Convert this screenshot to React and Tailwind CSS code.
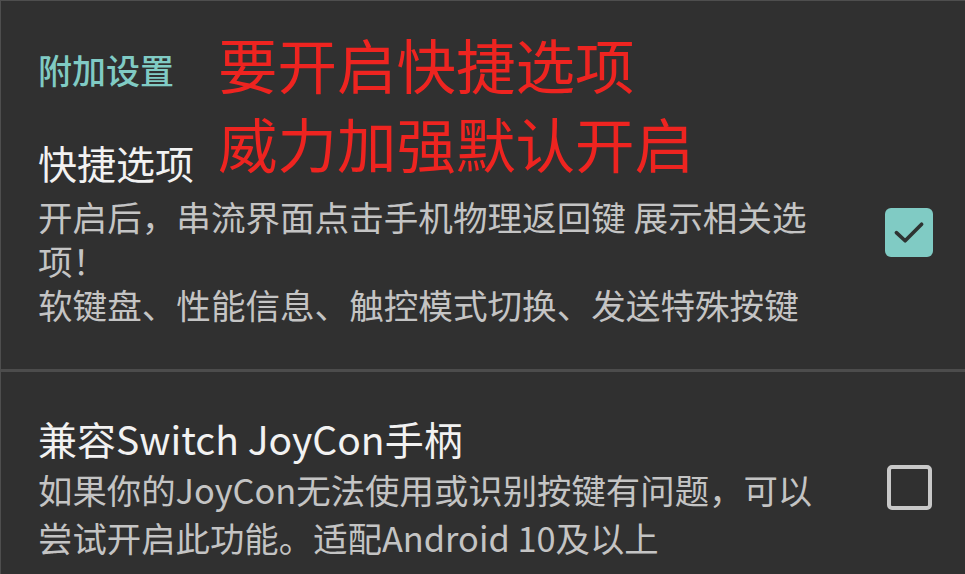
import React from "react";

const font = { fontFamily: '"Noto Sans CJK SC", "Noto Sans", sans-serif' };

function CheckedBox() {
  return (
    <div className="w-[48px] h-[49px] rounded-[6px] bg-[#80cbc4] flex items-center justify-center shrink-0">
      <svg width="42" height="42" viewBox="0 0 24 24" fill="none">
        <path d="M4.8 12.4l5 4.6L19.2 7.6" stroke="#2e3332" strokeWidth="2.1" strokeLinecap="round" strokeLinejoin="round" />
      </svg>
    </div>
  );
}

function EmptyBox() {
  return <div className="w-[45px] h-[45px] rounded-[5px] border-[4px] border-[#c8c8c8] shrink-0" />;
}

export default function App() {
  return (
    <div
      className="relative w-[965px] h-[574px] overflow-hidden bg-[#303030] border-t border-l border-[#4e4e4e]"
      style={font}
    >
      <div className="pl-[37px] pt-[45px]">
        <div className="h-[48px] leading-[48px] text-[34px] font-medium text-[#80cbc4]">附加设置</div>
      </div>

      <div className="flex items-center pl-[37px] pr-[32px] mt-[44px]">
        <div className="flex-1 flex flex-col">
          <div className="h-[48px] leading-[48px] text-[39px] text-[#f2f2f2]">快捷选项</div>
          <div className="mt-[8px] text-[34.6px] leading-[44px] text-[#c4c4c4]">
            <div className="whitespace-nowrap">开启后，串流界面点击手机物理返回键 展示相关选</div>
            <div className="whitespace-nowrap">项！</div>
            <div className="whitespace-nowrap">软键盘、性能信息、触控模式切换、发送特殊按键</div>
          </div>
        </div>
        <CheckedBox />
      </div>

      <div className="mt-[43px] h-[3px] bg-[#4c4c4c]" />

      <div className="flex items-center pl-[37px] pr-[33px] mt-[42px]">
        <div className="flex-1 flex flex-col">
          <div className="h-[48px] leading-[48px] text-[39px] text-[#f2f2f2] whitespace-nowrap">兼容Switch JoyCon手柄</div>
          <div className="mt-[3px] text-[34.4px] leading-[48px] text-[#c4c4c4]">
            <div className="whitespace-nowrap">如果你的JoyCon无法使用或识别按键有问题，可以</div>
            <div className="whitespace-nowrap">尝试开启此功能。适配Android 10及以上</div>
          </div>
        </div>
        <EmptyBox />
      </div>

      <div className="absolute left-[217px] top-[23px] text-[59.5px] leading-[79px] text-[#ee2420]">
        <div className="whitespace-nowrap">要开启快捷选项</div>
        <div className="whitespace-nowrap">威力加强默认开启</div>
      </div>
    </div>
  );
}
